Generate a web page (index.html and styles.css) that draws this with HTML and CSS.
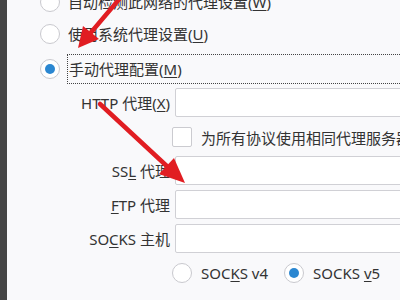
FILE: index.html
```html
<!DOCTYPE html>
<html lang="zh-CN">
<head>
    <meta charset="UTF-8">
    <meta name="viewport" content="width=device-width, initial-scale=1.0">
    <title>连接设置</title>
    <link rel="stylesheet" href="styles.css">
</head>
<body>

    <div class="window">
        <div class="edge"></div>

        <div class="panel">
            <!-- proxy mode -->
            <div class="option first">
                <span class="radio"></span>
                <span class="option-text">自动检测此网络的代理设置(<u>W</u>)</span>
            </div>
            <div class="option second">
                <span class="radio"></span>
                <span class="option-text">使用系统代理设置(<u>U</u>)</span>
            </div>
            <div class="option third">
                <span class="radio checked"></span>
                <span class="option-text focused">手动代理配置(<u>M</u>)</span>
            </div>

            <!-- manual proxy fields -->
            <div class="proxy-grid">
                <label class="field-label">HTTP 代理(<u>X</u>)</label>
                <div class="field"></div>

                <div></div>
                <div class="check-row">
                    <span class="checkbox"></span>
                    <span>为所有协议使用相同代理服务器(<u>S</u>)</span>
                </div>

                <label class="field-label">SS<u>L</u> 代理</label>
                <div class="field"></div>

                <label class="field-label"><u>F</u>TP 代理</label>
                <div class="field"></div>

                <label class="field-label">SO<u>C</u>KS 主机</label>
                <div class="field"></div>

                <div></div>
                <div class="socks-row">
                    <span class="radio"></span>
                    <span class="socks-text">SOC<u>K</u>S v4</span>
                    <span class="radio checked"></span>
                    <span>SOCKS <u>v</u>5</span>
                </div>
            </div>
        </div>
    </div>

    <!-- red arrows drawn over the screenshot -->
    <svg class="arrows" width="400" height="300" viewBox="0 0 400 300">
        <line x1="121" y1="-3" x2="88" y2="36" stroke="#e11d22" stroke-width="4.5" stroke-linecap="round"/>
        <polygon points="78,48 83,26 99,39" fill="#e11d22"/>
        <line x1="100" y1="104" x2="170" y2="169" stroke="#e11d22" stroke-width="4.5" stroke-linecap="round"/>
        <polygon points="185,183 159,174 174,158" fill="#e11d22"/>
    </svg>

</body>
</html>
```

FILE: styles.css
```css
html, body {
    margin: 0;
    padding: 0;
    overflow: hidden;
}
body {
    width: 400px;
    height: 300px;
    background-color: #f9f9fb;
    color: #333;
    font-family: "Noto Sans", "Noto Sans CJK SC", sans-serif;
    font-size: 15px;
    position: relative;
}
u {
    text-underline-offset: 2px;
}
.window {
    display: flex;
    height: 300px;
}
.edge {
    width: 7px;
    flex-shrink: 0;
    background-color: #454545;
}
.panel {
    flex: 1;
    padding-left: 33px;
    overflow: hidden;
}

/* radio options */
.option {
    display: flex;
    align-items: center;
    height: 30px;
    white-space: nowrap;
}
.option.first {
    margin-top: -13px;
}
.option.second {
    margin-top: 2px;
}
.option.third {
    margin-top: 5px;
}
.radio {
    width: 18px;
    height: 18px;
    flex-shrink: 0;
    border: 1px solid #c9c9ce;
    border-radius: 50%;
    background-color: #fff;
    position: relative;
}
.radio.checked::after {
    content: "";
    position: absolute;
    left: 4px;
    top: 4px;
    width: 10px;
    height: 10px;
    border-radius: 50%;
    background-color: #2b87d1;
}
.option-text {
    margin-left: 8px;
    line-height: 28px;
}
.option-text.focused {
    flex: 1;
    min-width: 360px;
    border: 1px dotted #444;
    padding-left: 1px;
    margin-left: 7px;
}

/* proxy fields */
.proxy-grid {
    display: grid;
    grid-template-columns: 130px 300px;
    grid-auto-rows: 29px;
    column-gap: 5px;
    row-gap: 5px;
    margin-top: 4px;
    white-space: nowrap;
}
.field-label {
    text-align: right;
    align-self: center;
}
.field {
    background-color: #fff;
    border: 1px solid #d0d0d5;
    border-radius: 2px;
}
.check-row {
    display: flex;
    align-items: center;
    gap: 9px;
    margin-left: -3px;
    margin-top: 1px;
}
.checkbox {
    width: 18px;
    height: 18px;
    flex-shrink: 0;
    background-color: #fff;
    border: 1px solid #cbcbd0;
    border-radius: 2px;
}
.socks-row {
    display: flex;
    align-items: center;
    gap: 9px;
    margin-left: -3px;
    margin-top: 1px;
}
.socks-text {
    margin-right: 7px;
}

.arrows {
    position: absolute;
    left: 0;
    top: 0;
    pointer-events: none;
}
```
